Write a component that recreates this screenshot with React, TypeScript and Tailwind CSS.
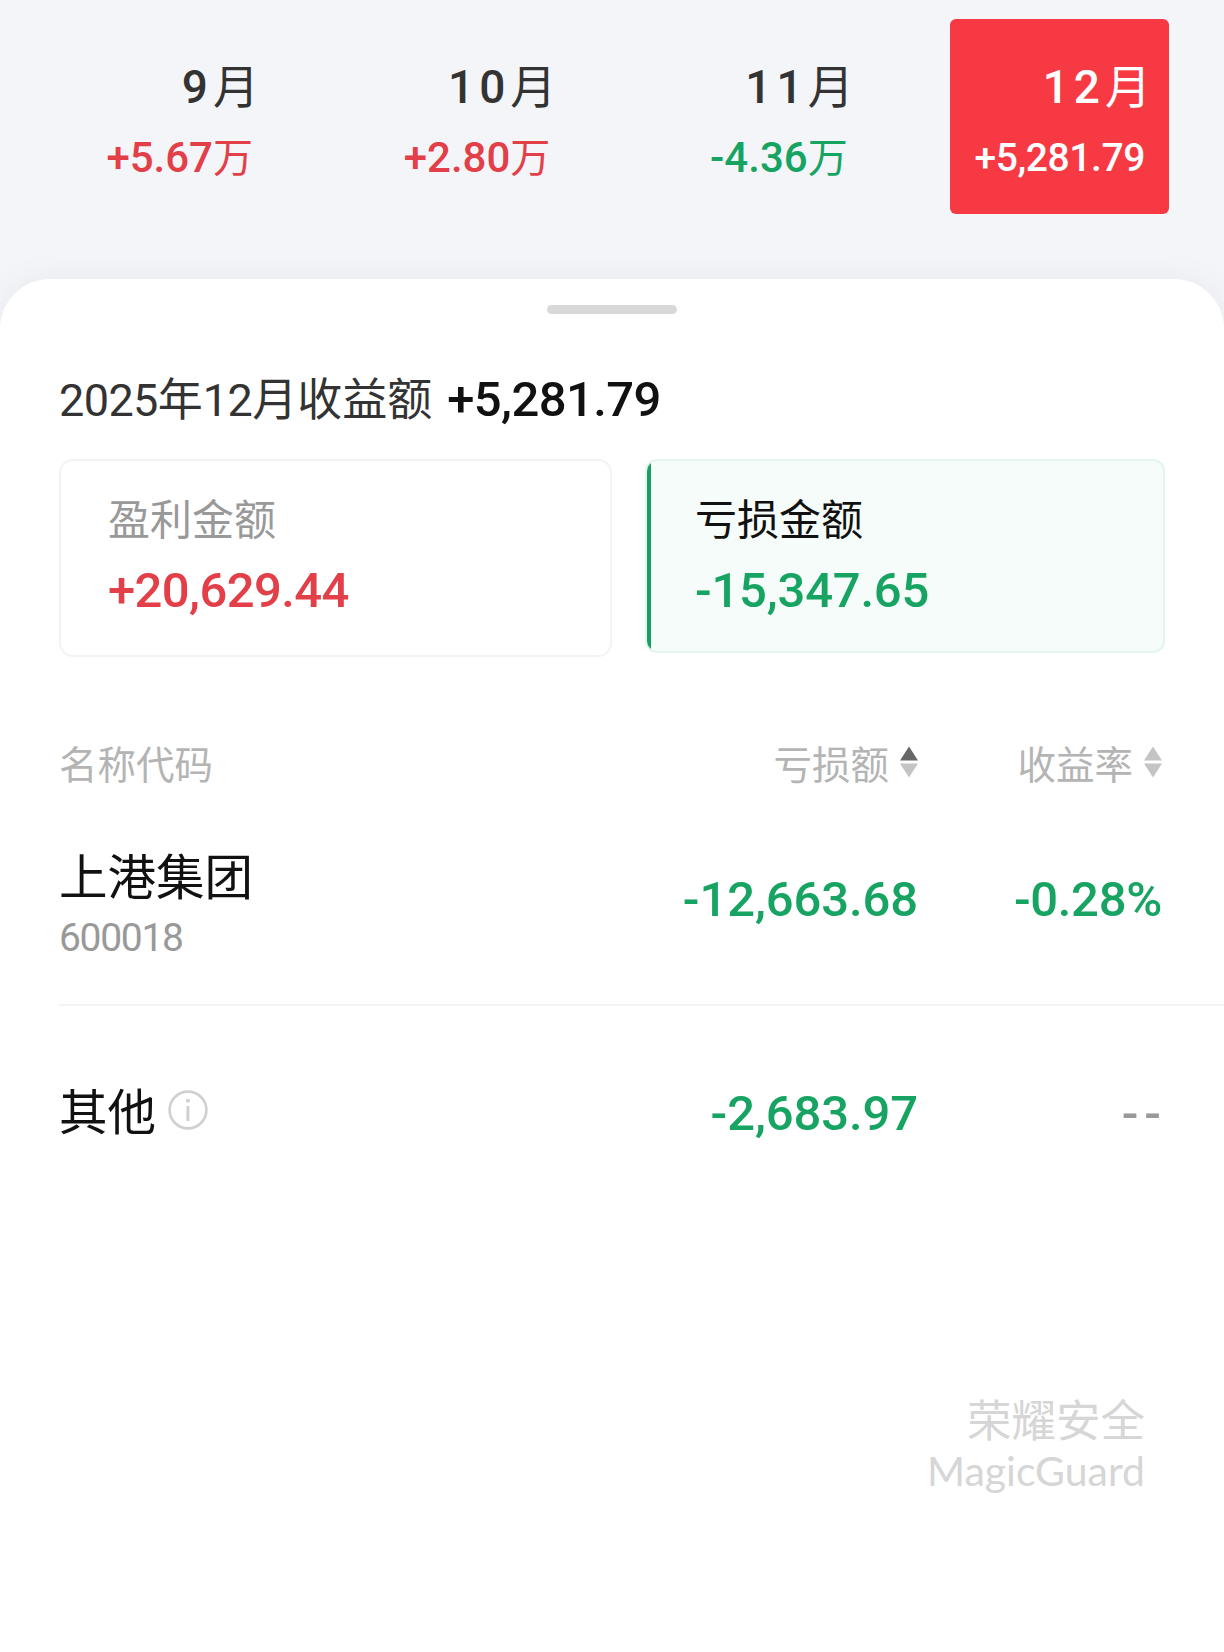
import clsx from "clsx";

const months = [
  { label: "9", amount: "+5.67", unit: "万", up: true },
  { label: "10", amount: "+2.80", unit: "万", up: true },
  { label: "11", amount: "-4.36", unit: "万", up: false },
  { label: "12", amount: "+5,281.79", unit: "", up: true, active: true },
];

const SortIcon = ({ active = false }: { active?: boolean }) => (
  <svg width="18" height="32" viewBox="0 0 18 32" className="mb-[8px] shrink-0">
    <path d="M9 0.5L18 14.5H0Z" fill={active ? "#666666" : "#c4c4c4"} />
    <path d="M0 17.5H18L9 31.5Z" fill="#c4c4c4" />
  </svg>
);

const InfoIcon = () => (
  <svg width="40" height="40" viewBox="0 0 40 40" fill="none" className="mb-[8px] shrink-0">
    <circle cx="20" cy="20" r="18.4" stroke="#d0d0d0" strokeWidth="2.6" />
    <rect x="18" y="9" width="3.8" height="3.6" rx="1" fill="#d0d0d0" />
    <rect x="18.4" y="16" width="3" height="15" fill="#d0d0d0" />
  </svg>
);

const MonthBar = () => {
  return (
    <div className="flex h-[279px] items-start justify-between pt-[19px] pl-[58px] pr-[55px]">
      {months.map((m) => (
        <div
          key={m.label}
          className={clsx(
            "flex h-[195px] w-[219px] flex-col items-end rounded-[6px] pr-[24px] pt-[40px] whitespace-nowrap",
            m.active ? "bg-[#f73943] text-white" : "text-[#333333]"
          )}
        >
          <p className="-mr-[6px] text-[46px] leading-[56px] font-medium tracking-[5px]">
            {m.label}
            <span className="font-normal tracking-normal">月</span>
          </p>
          <p
            className={clsx(
              "mt-[13px] font-medium leading-[60px]",
              m.active ? "text-[39px] tracking-[-0.4px]" : "text-[42px]",
              !m.active && (m.up ? "text-[#e23f48]" : "text-[#17a463]")
            )}
          >
            {m.amount}
            <span className="text-[40px] font-normal">{m.unit}</span>
          </p>
        </div>
      ))}
    </div>
  );
};

const Summary = () => {
  return (
    <div className="flex items-start justify-between pl-[59px] pr-[59px]">
      <div className="flex h-[198px] w-[553px] flex-col rounded-[14px] border-2 border-[#f3f3f3] pl-[47px] pt-[30px]">
        <p className="text-[42px] leading-[60px] text-[#999999]">盈利金额</p>
        <p className="mt-[10px] text-[49px] font-medium leading-[60px] tracking-[-0.6px] text-[#e23f48]">
          +20,629.44
        </p>
      </div>
      <div className="relative flex h-[194px] w-[520px] flex-col overflow-hidden rounded-[12px] border-2 border-[#e4f4ee] bg-[#f5fcfa] pl-[48px] pt-[30px]">
        <div className="absolute -left-[2px] -top-[2px] h-[194px] w-[6px] bg-[#1a9f63]" />
        <p className="text-[42px] leading-[60px] text-[#111111]">亏损金额</p>
        <p className="mt-[10px] text-[49px] font-medium leading-[60px] tracking-[-0.2px] text-[#17a463]">
          -15,347.65
        </p>
      </div>
    </div>
  );
};

const LossTable = () => {
  return (
    <div className="mt-[79px] flex flex-col pl-[59px] whitespace-nowrap">
      <div className="flex h-[60px] items-center pr-[62px] text-[38.5px] leading-[60px] text-[#b4b4b4]">
        <p className="flex-1">名称代码</p>
        <div className="flex items-center gap-[11px]">
          <p>亏损额</p>
          <SortIcon active />
        </div>
        <div className="flex w-[244px] items-center justify-end gap-[11px]">
          <p>收益率</p>
          <SortIcon />
        </div>
      </div>

      <div className="flex h-[210px] items-center border-b-2 border-[#f2f2f2] pr-[62px]">
        <div className="flex-1 pt-[12px]">
          <p className="text-[48.5px] leading-[64px] text-[#111111]">上港集团</p>
          <p className="text-[39px] leading-[54px] tracking-[-1.3px] text-[#999999]">600018</p>
        </div>
        <p className="text-[49px] font-medium leading-[60px] tracking-[-0.1px] text-[#17a463]">
          -12,663.68
        </p>
        <p className="w-[244px] text-right text-[49px] font-medium leading-[60px] tracking-[-0.3px] text-[#17a463]">
          -0.28%
        </p>
      </div>

      <div className="flex h-[216px] items-center pr-[62px]">
        <div className="flex flex-1 items-center gap-[12px]">
          <p className="text-[48.5px] leading-[64px] text-[#111111]">其他</p>
          <InfoIcon />
        </div>
        <p className="text-[49px] font-medium leading-[60px] tracking-[-0.1px] text-[#17a463]">
          -2,683.97
        </p>
        <p className="-mr-[5px] w-[249px] text-right text-[49px] font-medium leading-[60px] tracking-[6px] text-[#999999]">
          --
        </p>
      </div>
    </div>
  );
};

const App = () => {
  return (
    <main className="flex h-[1652px] w-[1224px] flex-col overflow-hidden bg-[#f4f5f9] font-[Roboto,'Noto_Sans_CJK_SC',sans-serif]">
      <MonthBar />
      <section className="flex flex-1 flex-col rounded-t-[50px] bg-white shadow-[0_0_36px_rgba(20,25,40,0.05)]">
        <div className="mx-auto mt-[26px] h-[9px] w-[130px] rounded-full bg-[#d8d8d8]" />
        <div className="mt-[56px] mb-[29px] flex h-[60px] items-baseline pl-[59px] leading-[60px] whitespace-nowrap">
          <p className="text-[45px] text-[#333333]">
            <span className="tracking-[-0.6px]">2025</span>年
            <span className="tracking-[-0.6px]">12</span>
            月收益额
          </p>
          <p className="ml-[15px] text-[49px] font-medium tracking-[-0.6px] text-[#111111]">
            +5,281.79
          </p>
        </div>
        <Summary />
        <LossTable />
        <div className="mt-auto mb-[156px] flex flex-col items-end pr-[79px] text-[#d6d6d6]">
          <p className="text-[44.5px] leading-[48px]">荣耀安全</p>
          <p className="font-[Lato,sans-serif] text-[41px] leading-[50px]">MagicGuard</p>
        </div>
      </section>
    </main>
  );
};

export default App;
